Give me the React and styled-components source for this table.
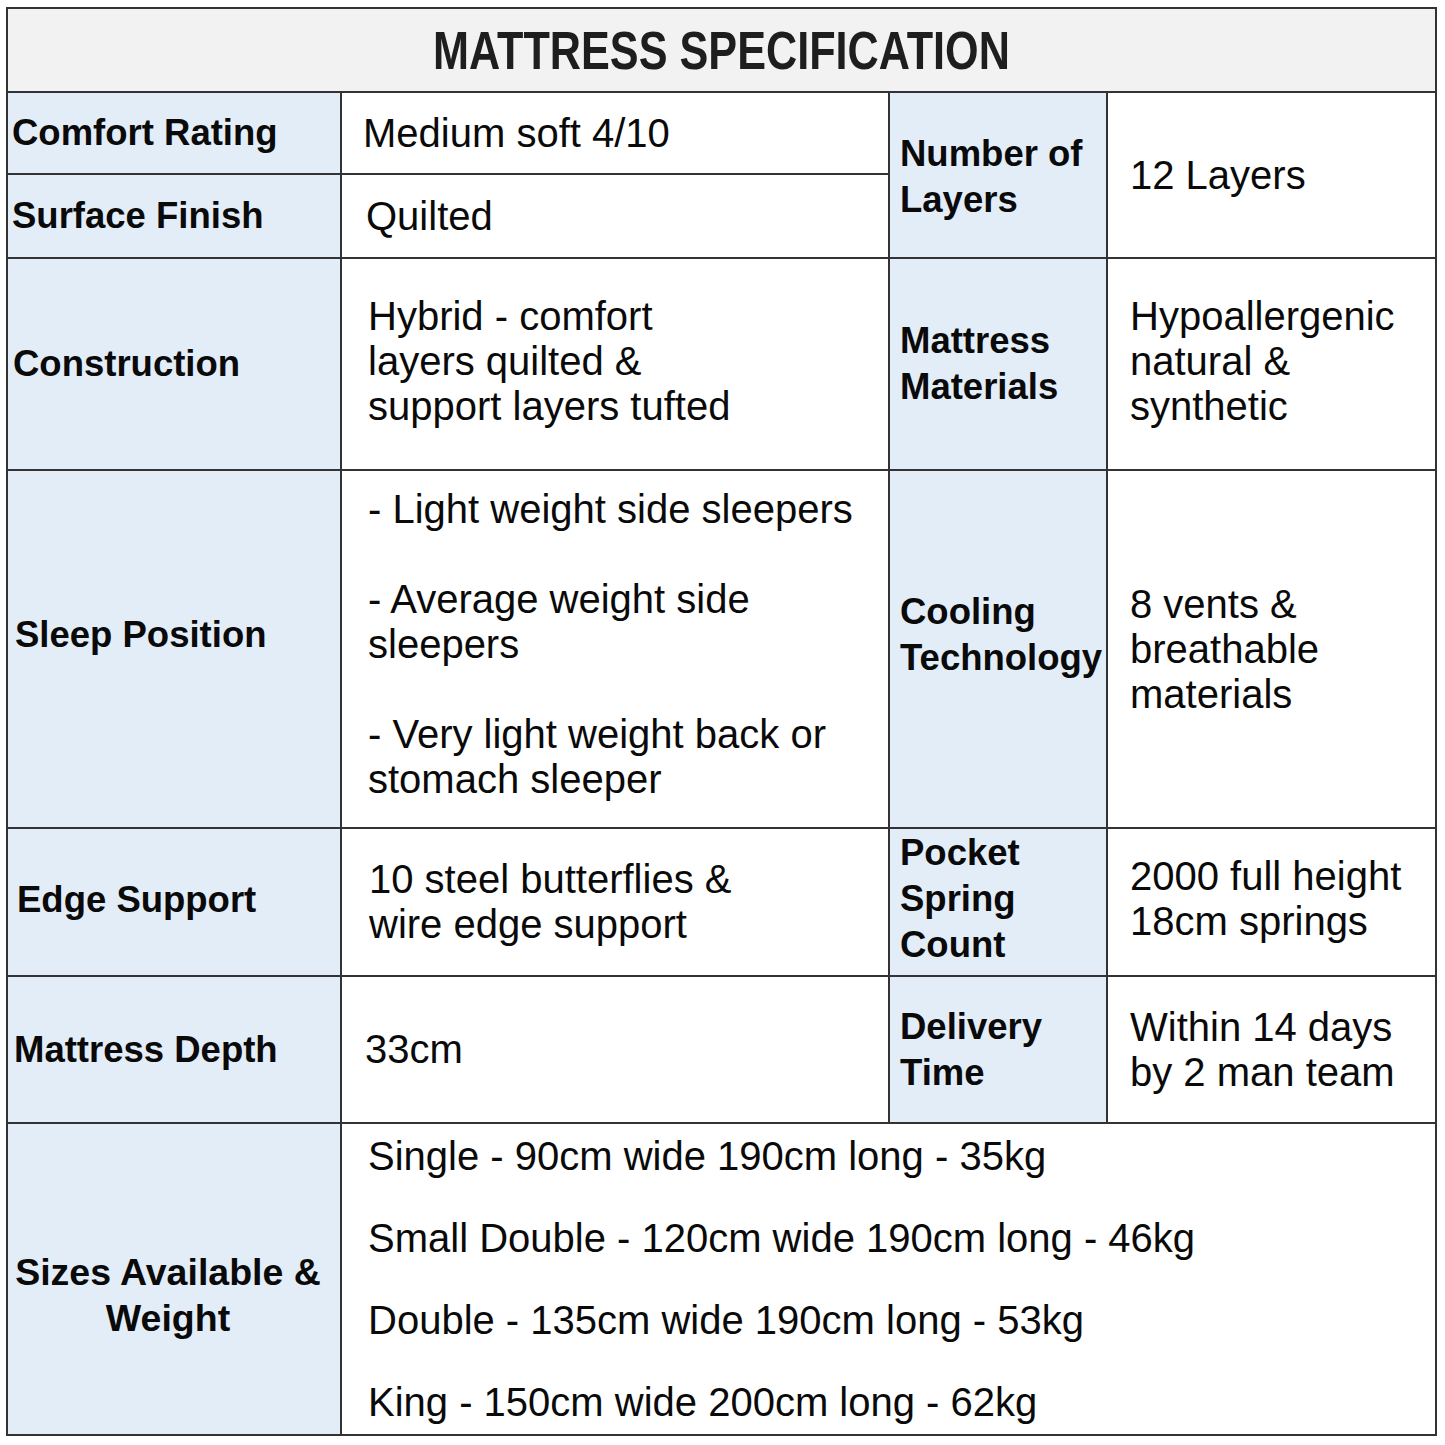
import styled, { createGlobalStyle } from "styled-components";

const GlobalStyle = createGlobalStyle`
  body {
    margin: 0;
    background: #ffffff;
    font-family: "Liberation Sans", Arial, sans-serif;
  }
`;

const Page = styled.div`
  padding: 7px 0 0 6px;
`;

const Table = styled.div`
  display: grid;
  width: 1431px;
  box-sizing: border-box;
  grid-template-columns: 332px 546px 216px 327px;
  grid-template-rows: 82px 80px 82px 210px 356px 146px 145px 310px;
  gap: 2px;
  padding: 2px;
  background: #333333;
`;

const Title = styled.div`
  grid-column: 1 / -1;
  display: flex;
  align-items: center;
  justify-content: center;
  background: #f2f2f2;
  overflow: hidden;
`;

const TitleText = styled.span`
  display: inline-block;
  font-family: "Liberation Sans", Arial, sans-serif;
  font-weight: 700;
  font-size: 54px;
  color: #1e1e1e;
  transform: scaleX(0.8);
  white-space: nowrap;
`;

const Label = styled.div`
  display: flex;
  align-items: center;
  justify-content: ${({ $center }) => ($center ? "center" : "flex-start")};
  text-align: ${({ $center }) => ($center ? "center" : "left")};
  background: #e2edf8;
  padding-left: ${({ $indent }) => $indent ?? 6}px;
  padding-right: ${({ $right }) => $right || 0}px;
  padding-top: ${({ $down }) => ($down > 0 ? $down * 2 : 0)}px;
  padding-bottom: ${({ $down }) => ($down < 0 ? -$down * 2 : 0)}px;
  font-weight: 700;
  font-size: ${({ $size }) => $size || 36.5}px;
  line-height: 46px;
  color: #0a0a0a;
  white-space: nowrap;
  grid-row: ${({ $rows }) => $rows || "auto"};
  grid-column: ${({ $cols }) => $cols || "auto"};
`;

const Value = styled.div`
  display: flex;
  flex-direction: column;
  justify-content: center;
  background: #ffffff;
  padding-left: ${({ $indent }) => $indent || 24}px;
  padding-bottom: ${({ $up }) => $up || 0}px;
  font-size: 40px;
  line-height: 45px;
  color: #0a0a0a;
  white-space: nowrap;
  grid-row: ${({ $rows }) => $rows || "auto"};
  grid-column: ${({ $cols }) => $cols || "auto"};
  gap: ${({ $gap }) => $gap || 0}px;
`;

const Blank = styled.div`
  height: 45px;
`;

const sizes = [
  "Single - 90cm wide 190cm long - 35kg",
  "Small Double - 120cm wide 190cm long - 46kg",
  "Double - 135cm wide 190cm long - 53kg",
  "King - 150cm wide 200cm long - 62kg",
];

const App = () => {
  return (
    <Page>
      <GlobalStyle />
      <Table>
        <Title>
          <TitleText>MATTRESS SPECIFICATION</TitleText>
        </Title>

        <Label $indent={4} $rows="2" $cols="1">
          Comfort Rating
        </Label>
        <Value $indent={21} $rows="2" $cols="2">
          Medium soft 4/10
        </Value>
        <Label $indent={10} $rows="2 / span 2" $cols="3" $down={2}>
          <div>
            Number of
            <br />
            Layers
          </div>
        </Label>
        <Value $indent={22} $rows="2 / span 2" $cols="4">
          12 Layers
        </Value>

        <Label $indent={4} $rows="3" $cols="1">
          Surface Finish
        </Label>
        <Value $indent={24} $rows="3" $cols="2">
          Quilted
        </Value>

        <Label $indent={5}>Construction</Label>
        <Value $indent={26} $up={6}>
          <div>
            Hybrid - comfort
            <br />
            layers quilted &amp;
            <br />
            support layers tufted
          </div>
        </Value>
        <Label $indent={10}>
          <div>
            Mattress
            <br />
            Materials
          </div>
        </Label>
        <Value $indent={22} $up={6}>
          <div>
            Hypoallergenic
            <br />
            natural &amp;
            <br />
            synthetic
          </div>
        </Value>

        <Label $indent={7} $down={-14}>
          Sleep Position
        </Label>
        <Value $indent={26} $up={10}>
          <div>- Light weight side sleepers</div>
          <Blank />
          <div>
            - Average weight side
            <br />
            sleepers
          </div>
          <Blank />
          <div>
            - Very light weight back or
            <br />
            stomach sleeper
          </div>
        </Value>
        <Label $indent={10} $down={-14}>
          <div>
            Cooling
            <br />
            Technology
          </div>
        </Label>
        <Value $indent={22}>
          <div>
            8 vents &amp;
            <br />
            breathable
            <br />
            materials
          </div>
        </Value>

        <Label $indent={9} $down={-2}>
          Edge Support
        </Label>
        <Value $indent={27}>
          <div>
            10 steel butterflies &amp;
            <br />
            wire edge support
          </div>
        </Value>
        <Label $indent={10} $down={-3}>
          <div>
            Pocket
            <br />
            Spring
            <br />
            Count
          </div>
        </Label>
        <Value $indent={22} $up={6}>
          <div>
            2000 full height
            <br />
            18cm springs
          </div>
        </Value>

        <Label $indent={6}>Mattress Depth</Label>
        <Value $indent={23}>33cm</Value>
        <Label $indent={10}>
          <div>
            Delivery
            <br />
            Time
          </div>
        </Label>
        <Value $indent={22}>
          <div>
            Within 14 days
            <br />
            by 2 man team
          </div>
        </Value>

        <Label $center $indent={0} $right={12} $down={16} $size={37.5}>
          <div>
            Sizes Available &amp;
            <br />
            Weight
          </div>
        </Label>
        <Value $indent={26} $cols="2 / span 3" $gap={37}>
          {sizes.map((size) => (
            <div key={size}>{size}</div>
          ))}
        </Value>
      </Table>
    </Page>
  );
};

export default App;
